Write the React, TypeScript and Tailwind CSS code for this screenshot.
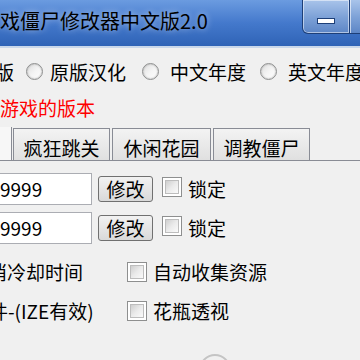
import React from "react";

const cjk = { fontFamily: '"Noto Sans CJK SC", "Liberation Sans", sans-serif' };

function Radio() {
  return (
    <span className="inline-block w-[17px] h-[17px] shrink-0 rounded-full border border-[#8e8f8f] bg-gradient-to-br from-[#dcdcdc] via-[#f4f4f4] to-[#ffffff] shadow-[inset_0_0_2px_#a0a0a0]" />
  );
}

function CheckBox() {
  return (
    <span className="inline-block w-[20px] h-[20px] shrink-0 border border-[#8e8f8f] bg-white p-[2px]">
      <span className="block w-full h-full bg-gradient-to-br from-[#cfcfcf] via-[#ebebeb] to-[#fafafa] border border-[#bdbdbd]" />
    </span>
  );
}

function Tab({ label, w }: { label: string; w: string }) {
  return (
    <div
      className={`${w} h-[32px] shrink-0 border border-b-0 border-[#898c95] bg-gradient-to-b from-[#f3f3f3] to-[#e0e0e0] flex items-end justify-center text-[19px] leading-[24px]`}
    >
      {label}
    </div>
  );
}

function ValueRow() {
  return (
    <div className="flex items-center h-[32px]">
      <div className="w-[92px] h-[32px] border border-[#abadb3] border-l-0 bg-white flex items-center text-[19px] pl-0">
        9999
      </div>
      <button className="ml-[6px] w-[55px] h-[26px] rounded-[3px] border border-[#707070] bg-gradient-to-b from-[#f2f2f2] to-[#d9d9d9] text-[19px] leading-[22px] flex items-center justify-center">
        修改
      </button>
      <span className="ml-[9px]">
        <CheckBox />
      </span>
      <span className="ml-[6px] text-[19px]">锁定</span>
    </div>
  );
}

export default function App() {
  return (
    <div
      className="w-[360px] h-[360px] overflow-hidden bg-[#f0f0f0] text-black relative"
      style={cjk}
    >
      {/* title bar */}
      <div className="h-[48px] flex bg-gradient-to-b from-[#6b9be0] via-[#4479cc] to-[#2f63b6] border-b-2 border-[#c9d7ea]">
        <div className="w-[302px] shrink-0 flex items-center text-[20px] leading-none pb-[4px] [text-shadow:0_0_6px_rgba(255,255,255,0.6)]">
          戏僵尸修改器中文版2.0
        </div>
        <div className="flex items-start shrink-0">
          <div className="w-[48px] h-[34px] rounded-bl-[6px] border border-t-0 border-[#1d3f78] bg-gradient-to-b from-[#a9c4ea] via-[#7fa3d8] to-[#5d86c6] flex items-center justify-center shadow-[inset_0_0_0_1px_rgba(255,255,255,0.5)]">
            <span className="block w-[18px] h-[6px] bg-white border border-[#1d3f78] mt-[8px]" />
          </div>
          <div className="w-[30px] h-[34px] border border-t-0 border-l-0 border-[#1d3f78] bg-gradient-to-b from-[#a9c4ea] via-[#7fa3d8] to-[#5d86c6] shadow-[inset_1px_0_0_rgba(255,255,255,0.6)]" />
        </div>
      </div>

      {/* version radios */}
      <div className="mt-[12px] flex items-center h-[24px] text-[19px] whitespace-nowrap">
        <span className="-ml-[5px]">版</span>
        <span className="ml-[12px]"><Radio /></span>
        <span className="ml-[7px]">原版汉化</span>
        <span className="ml-[16px]"><Radio /></span>
        <span className="ml-[11px]">中文年度</span>
        <span className="ml-[14px]"><Radio /></span>
        <span className="ml-[11px]">英文年度</span>
      </div>

      <div className="mt-[10px] h-[24px] text-[19px] text-[#ff0000] whitespace-nowrap">
        游戏的版本
      </div>

      {/* tabs */}
      <div className="mt-[10px] flex items-end h-[33px] border-b border-[#898c95]">
        <div className="w-[12px] h-[33px] shrink-0 border-r border-[#898c95] bg-[#f7f7f7]" />
        <div className="flex gap-[2px] ml-[1px]">
          <Tab label="疯狂跳关" w="w-[97px]" />
          <Tab label="休闲花园" w="w-[99px]" />
          <Tab label="调教僵尸" w="w-[97px]" />
        </div>
      </div>

      {/* values */}
      <div className="mt-[12px] flex flex-col gap-[7px]">
        <ValueRow />
        <ValueRow />
      </div>

      {/* options */}
      <div className="mt-[16px] grid grid-cols-[127px_1fr] gap-y-[15px] text-[19px] whitespace-nowrap">
        <div className="h-[24px] flex items-center">
          <span className="-ml-[12px]">消冷却时间</span>
        </div>
        <div className="h-[24px] flex items-center gap-[6px]">
          <CheckBox />
          <span>自动收集资源</span>
        </div>
        <div className="h-[24px] flex items-center">
          <span className="-ml-[11px]">件-(IZE有效)</span>
        </div>
        <div className="h-[24px] flex items-center gap-[6px]">
          <CheckBox />
          <span>花瓶透视</span>
        </div>
      </div>

      <div className="mt-[31px] ml-[199px] w-[32px] h-[32px] rounded-full border-2 border-[#c4c4c4]" />
    </div>
  );
}
